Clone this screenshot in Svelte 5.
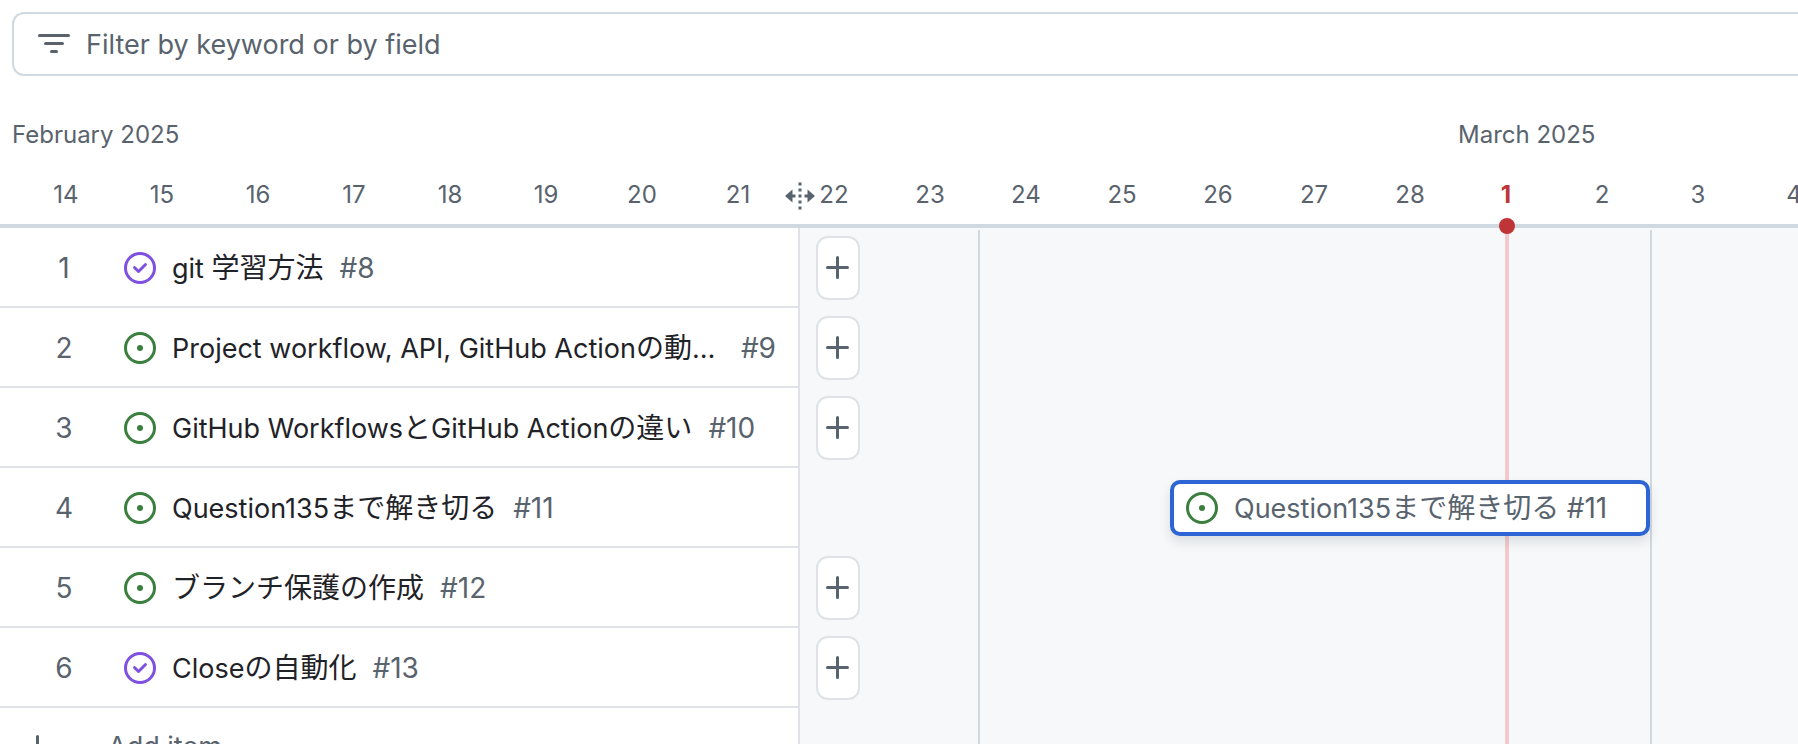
<script>
  const days = [14, 15, 16, 17, 18, 19, 20, 21, 22, 23, 24, 25, 26, 27, 28, 1, 2, 3, 4];
  const months = [
    { name: 'February 2025', span: 15 },
    { name: 'March 2025', span: 4 }
  ];
  const todayIndex = 15;
  const items = [
    { title: 'git 学習方法', number: 8, closed: true },
    { title: 'Project workflow, API, GitHub Actionの動…', number: 9, clipped: true },
    { title: 'GitHub WorkflowsとGitHub Actionの違い', number: 10 },
    { title: 'Question135まで解き切る', number: 11, scheduled: true },
    { title: 'ブランチ保護の作成', number: 12 },
    { title: 'Closeの自動化', number: 13, closed: true }
  ];

  // Splits a title into Latin and Japanese runs; odd entries are Japanese.
  const runs = (text) => text.split(/([\u3040-\u30ff\u4e00-\u9fff]+)/);
</script>

{#snippet mixed(text)}{#each runs(text) as run, i}{#if i % 2}<span lang="ja">{run}</span>{:else}{run}{/if}{/each}{/snippet}

{#snippet plus()}
  <svg class="icon" viewBox="0 0 16 16" aria-hidden="true"><path d="M7.75 2a.75.75 0 0 1 .75.75V7h4.25a.75.75 0 0 1 0 1.5H8.5v4.25a.75.75 0 0 1-1.5 0V8.5H2.75a.75.75 0 0 1 0-1.5H7V2.75A.75.75 0 0 1 7.75 2Z" /></svg>
{/snippet}

{#snippet state(closed)}
  {#if closed}
    <svg class="icon closed" viewBox="0 0 16 16" aria-hidden="true"><path d="M11.28 6.78a.75.75 0 0 0-1.06-1.06L7.25 8.69 5.78 7.22a.75.75 0 0 0-1.06 1.06l2 2a.75.75 0 0 0 1.06 0l3.5-3.5Z" /><path d="M16 8A8 8 0 1 1 0 8a8 8 0 0 1 16 0Zm-1.5 0a6.5 6.5 0 1 0-13 0 6.5 6.5 0 0 0 13 0Z" /></svg>
  {:else}
    <svg class="icon open" viewBox="0 0 16 16" aria-hidden="true"><path d="M8 9.5a1.5 1.5 0 1 0 0-3 1.5 1.5 0 0 0 0 3Z" /><path d="M8 0a8 8 0 1 1 0 16A8 8 0 0 1 8 0ZM1.5 8a6.5 6.5 0 1 0 13 0 6.5 6.5 0 0 0-13 0Z" /></svg>
  {/if}
{/snippet}

<main>
  <label class="filter">
    <svg class="icon" viewBox="0 0 16 16" aria-hidden="true"><path d="M.75 3h14.5a.75.75 0 0 1 0 1.5H.75a.75.75 0 0 1 0-1.5ZM3 7.75A.75.75 0 0 1 3.75 7h8.5a.75.75 0 0 1 0 1.5h-8.5A.75.75 0 0 1 3 7.75Zm3 4a.75.75 0 0 1 .75-.75h2.5a.75.75 0 0 1 0 1.5h-2.5a.75.75 0 0 1-.75-.75Z" /></svg>
    <input type="text" placeholder="Filter by keyword or by field" aria-label="Filter by keyword or by field" />
  </label>

  <section class="roadmap">
    <header>
      <div class="months">
        {#each months as month}
          <div style:grid-column="span {month.span}">{month.name}</div>
        {/each}
      </div>
      <div class="days">
        {#each days as day, i}
          <div class:today={i === todayIndex}>{day}</div>
        {/each}
      </div>
      <svg class="resize" viewBox="0 0 32 32" aria-hidden="true">
        <path d="M1 16 8.500 9.500v5h3v3h-3v5ZM31 16l-7.500-6.500v5h-3v3h3v5Z" />
        <path d="M16 2.500v28" fill="none" stroke="currentColor" stroke-width="3" stroke-dasharray="3 3" />
      </svg>
    </header>

    <div class="body">
      <ol class="items">
        {#each items as item, i}
          <li class:clipped={item.clipped}>
            <span class="index">{i + 1}</span>
            {@render state(item.closed)}
            <a class="title" href="#{item.number}">{@render mixed(item.title)}</a>
            <span class="number">#{item.number}</span>
          </li>
        {/each}
        <li class="add">
          <button>{@render plus()}Add item</button>
        </li>
      </ol>

      <div class="chart">
        {#each items as item}
          <div class="lane">
            {#if !item.scheduled}
              <button class="place" aria-label="Add dates to #{item.number}">{@render plus()}</button>
            {/if}
          </div>
        {/each}
      </div>

      <div class="week" style:--col={10}></div>
      <div class="week" style:--col={17}></div>
      <div class="now"></div>
      <a class="bar" href="#11">{@render state(false)}<span class="label">{@render mixed('Question135まで解き切る')} <span class="number">#11</span></span></a>
    </div>
  </section>
</main>

<style>
  :global(body) {
    background: #fff;
    overflow: hidden;
  }
  main {
    --day: 96px;
    --start: 18px;
    --muted: #59636e;
    --line: #d1d9e0;
    --soft: #dfe3e8;
    height: 100vh;
    display: flex;
    flex-direction: column;
    overflow: hidden;
    padding-top: 12px;
    box-sizing: border-box;
    color: var(--muted);
    font-family: Inter, "Noto Sans CJK JP", sans-serif;
    font-size: 27px;
    line-height: 40px;
  }
  [lang="ja"], .number, .index { font-size: 28px; }
  .icon {
    width: 32px;
    height: 32px;
    flex: none;
    display: block;
    fill: currentColor;
  }
  .open { color: #3a7f3d; }
  .closed { color: #7d50df; }
  a { color: inherit; text-decoration: none; }
  button {
    font: inherit;
    color: inherit;
    background: none;
    border: 0;
    padding: 0;
  }
  .filter {
    display: flex;
    align-items: center;
    gap: 16px;
    height: 64px;
    flex: none;
    box-sizing: border-box;
    margin: 0 -16px 0 12px;
    padding: 0 24px;
    border: 2px solid var(--line);
    border-radius: 12px;
  }
  .filter input {
    flex: 1;
    min-width: 0;
    height: 40px;
    border: 0;
    padding: 2px 0 0;
    outline: 0;
    background: none;
    font: inherit;
    color: inherit;
  }
  .filter input::placeholder { color: var(--muted); opacity: 1; }
  .roadmap {
    flex: 1;
    display: flex;
    flex-direction: column;
    min-height: 0;
    padding-top: 28px;
  }
  header {
    position: relative;
    flex: none;
    font-size: 24px;
    line-height: 58px;
    border-bottom: 4px solid var(--line);
  }
  .months, .days {
    display: grid;
    grid-template-columns: repeat(19, var(--day));
    padding: 2px 0 0 var(--start);
    white-space: nowrap;
  }
  .months div:first-child { margin-left: -6px; }
  .days div { text-align: center; }
  .days .today { color: #bf3437; font-weight: 700; }
  .resize {
    position: absolute;
    left: 784px;
    bottom: 12px;
    width: 32px;
    height: 32px;
    color: var(--muted);
    fill: currentColor;
  }
  .body {
    position: relative;
    flex: 1;
    display: flex;
    min-height: 0;
    background: #f6f8fa;
  }
  .items {
    width: 800px;
    flex: none;
    box-sizing: border-box;
    margin: 0;
    padding: 0;
    list-style: none;
    background: #fff;
    border-right: 2px solid var(--soft);
  }
  li {
    display: flex;
    align-items: center;
    gap: 16px;
    height: 80px;
    box-sizing: border-box;
    padding: 2px 22px 0 0;
    border-bottom: 2px solid var(--soft);
    white-space: nowrap;
  }
  .index {
    width: 88px;
    padding-left: 20px;
    text-align: center;
  }
  .title { color: #1f2328; }
  .clipped .title { flex: 1; }
  .add { padding-top: 0; }
  .add button {
    display: flex;
    align-items: center;
    gap: 54px;
    padding-left: 22px;
  }
  .lane {
    height: 80px;
    box-sizing: border-box;
    padding: 8px 16px;
  }
  .place {
    display: flex;
    align-items: center;
    justify-content: center;
    width: 44px;
    height: 64px;
    box-sizing: border-box;
    background: #fff;
    border: 2px solid var(--soft);
    border-radius: 12px;
  }
  .week {
    position: absolute;
    top: 2px;
    bottom: 0;
    left: calc(var(--start) + var(--day) * var(--col));
    width: 2px;
    background: var(--line);
  }
  .now {
    position: absolute;
    top: 0;
    bottom: 0;
    left: 1505px;
    width: 4px;
    background: #f3c9cb;
  }
  .now::before {
    content: "";
    position: absolute;
    top: -10px;
    left: -6px;
    width: 16px;
    height: 16px;
    border-radius: 50%;
    background: #bf3437;
  }
  .bar {
    position: absolute;
    top: 252px;
    left: calc(var(--start) + var(--day) * 12);
    width: calc(var(--day) * 5);
    height: 56px;
    box-sizing: border-box;
    display: flex;
    align-items: center;
    gap: 16px;
    padding: 0 12px;
    background: #fff;
    border: 4px solid #2d66d4;
    border-radius: 10px;
    box-shadow: 0 6px 12px rgba(37, 41, 46, 0.12);
    white-space: nowrap;
  }
</style>
